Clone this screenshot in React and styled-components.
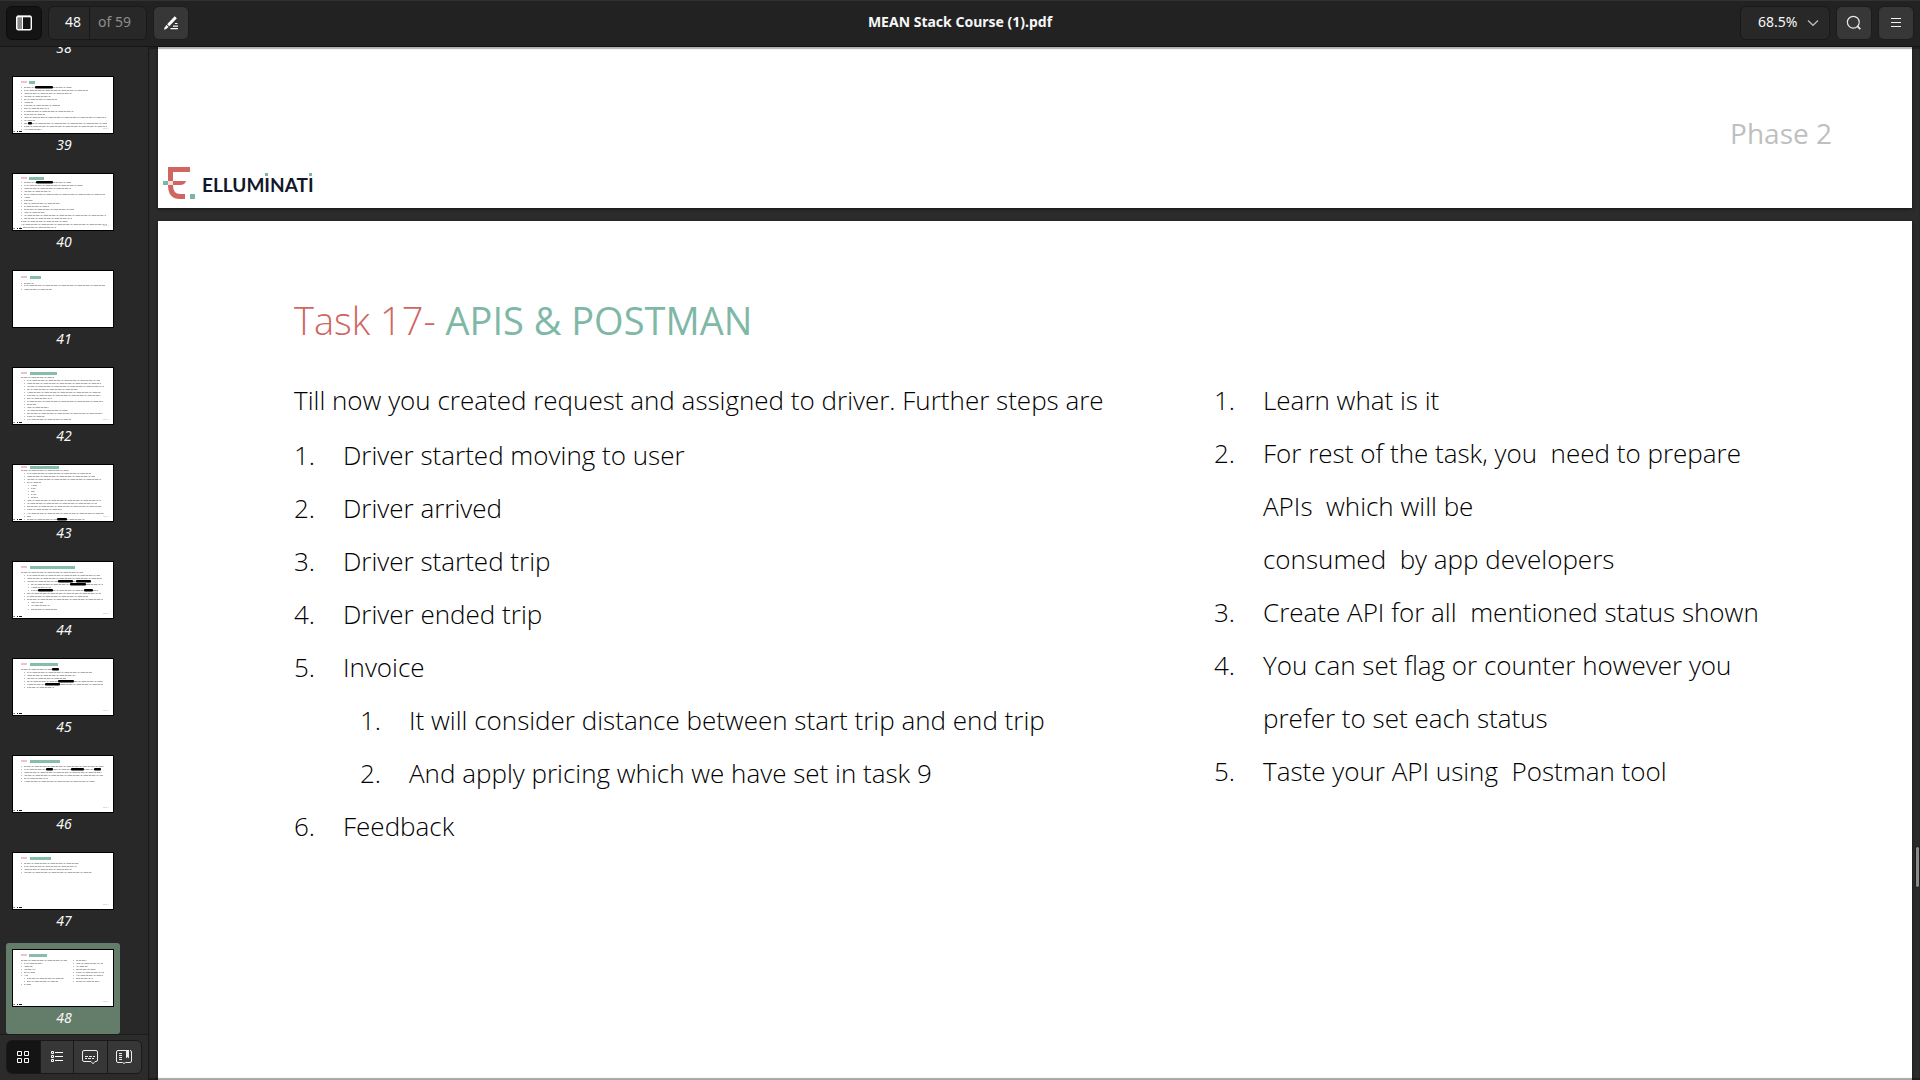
import React, { useState } from "react";
import styled, { createGlobalStyle, css } from "styled-components";

const GlobalStyle = createGlobalStyle`
  *, *::before, *::after { box-sizing: border-box; }
  body { margin: 0; background: #2b2b2b; }
  button, input, select { font: inherit; color: inherit; margin: 0; }
`;

const uiFont = `"Noto Sans", "Open Sans", sans-serif`;
const slideFont = `"Open Sans", "Noto Sans", sans-serif`;

const Window = styled.div`
  height: 100vh;
  display: flex;
  flex-direction: column;
  overflow: hidden;
  background: #2b2b2b;
  color: #f7f7f7;
  font: 14px/20px ${uiFont};
`;

const HeaderBar = styled.header`
  flex: none;
  height: 47px;
  display: grid;
  grid-template-columns: 1fr auto 1fr;
  align-items: start;
  padding: 5px 6px 0;
  background: #222222;
  border-top: 1px solid #323232;
  border-bottom: 1px solid #161616;
`;

const ToolGroup = styled.div`
  display: flex;
  gap: 6px;
  justify-content: ${(p) => (p.$end ? "flex-end" : "flex-start")};
`;

const Title = styled.h1`
  margin: 0;
  font-size: 14px;
  line-height: 32px;
  font-weight: 700;
`;

const ToolButton = styled.button`
  width: 36px;
  height: 34px;
  padding: 0;
  display: grid;
  place-items: center;
  border: 1px solid ${(p) => (p.$active ? "#0c0c0c" : "#1c1c1c")};
  border-radius: 6px;
  background: ${(p) => (p.$active ? "#141414" : "#373737")};
`;

const PageBox = styled.div`
  display: flex;
  height: 34px;
  border: 1px solid #191919;
  border-radius: 6px;
  background: #282828;
  overflow: hidden;
`;

const PageInput = styled.input`
  width: 41px;
  padding: 0 8px 2px 0;
  border: 0;
  border-right: 1px solid #191919;
  background: transparent;
  text-align: right;
  outline: 0;
`;

const PageTotal = styled.span`
  width: 56px;
  padding-left: 8px;
  line-height: 30px;
  color: #8d8d8d;
`;

const ZoomBox = styled.div`
  position: relative;
  svg {
    position: absolute;
    right: 11px;
    top: 13px;
    pointer-events: none;
  }
`;

const ZoomSelect = styled.select`
  appearance: none;
  width: 90px;
  height: 34px;
  padding: 0 24px 2px 17px;
  border: 1px solid #191919;
  border-radius: 6px;
  background: #282828;
  outline: 0;
`;

const Body = styled.div`
  flex: 1;
  min-height: 0;
  display: flex;
`;

const Sidebar = styled.aside`
  width: 149px;
  flex: none;
  display: flex;
  flex-direction: column;
  border-right: 1px solid #1a1a1a;
  background: #282828;
`;

const ThumbList = styled.ol`
  flex: 1;
  min-height: 0;
  margin: 0;
  padding: 0 0 0 6px;
  list-style: none;
  display: flex;
  flex-direction: column;
  justify-content: flex-end;
  align-items: flex-start;
  gap: 6px;
  overflow: hidden;
`;

const ThumbItem = styled.li`
  flex: none;
`;

const ThumbButton = styled.button`
  width: 114px;
  height: 91px;
  padding: 6px;
  display: flex;
  flex-direction: column;
  border: 0;
  border-radius: 3px;
  font-style: italic;
  background: ${(p) => (p.$active ? "#647d6b" : "transparent")};
  svg {
    flex: none;
    border: 1px solid #000;
    background: #fff;
  }
`;

const ThumbLabel = styled.span`
  width: 100%;
  padding-left: 2px;
  line-height: 21px;
  text-align: center;
`;

const SidebarFooter = styled.nav`
  flex: none;
  height: 46px;
  padding: 5px 6px;
  background: #2b2b2b;
  border-top: 1px solid #1c1c1c;
`;

const TabSwitch = styled.div`
  display: grid;
  grid-template-columns: repeat(4, 1fr);
  height: 34px;
  border: 1px solid #191919;
  border-radius: 6px;
  overflow: hidden;
`;

const Tab = styled.button`
  padding: 0;
  display: grid;
  place-items: center;
  border: 0;
  background: ${(p) => (p.$active ? "#141414" : "#373737")};
  &:not(:last-child) { border-right: 1px solid #191919; }
`;

const Viewer = styled.main`
  position: relative;
  flex: 1;
  min-width: 0;
  padding: 0 8px 0 9px;
  display: flex;
  flex-direction: column;
  gap: 13px;
  background: #2b2b2b;
  &::after {
    content: "";
    position: absolute;
    inset: 0;
    pointer-events: none;
    box-shadow: inset 0 2px 1px rgba(0, 0, 0, 0.3), inset 0 -2px 1px rgba(0, 0, 0, 0.35);
  }
`;

const ScrollThumb = styled.div`
  position: absolute;
  z-index: 1;
  right: 0;
  top: 799px;
  width: 5px;
  height: 42px;
  border: 1px solid #1a1a1a;
  border-radius: 3px;
  background: #8a8a8a;
`;

const sheet = css`
  background: #fff;
  color: #000;
  font-family: ${slideFont};
  box-shadow: 0 1px 3px rgba(0, 0, 0, 0.5);
`;

const PreviousPage = styled.section`
  ${sheet}
  flex: none;
  padding: 66px 80px 7px 5px;
  display: flex;
  flex-direction: column;
  gap: 14px;
`;

const Phase = styled.p`
  margin: 0;
  align-self: flex-end;
  font-size: 28px;
  line-height: 40px;
  color: #bfbfbf;
`;

const Brand = styled.div`
  display: flex;
  gap: 6px;
  height: 34px;
  font: 700 19px/36px Lato, sans-serif;
  color: #12182b;
`;

const DottedI = styled.span`
  position: relative;
  &::before {
    content: "";
    position: absolute;
    left: 1px;
    top: 0;
    width: 3px;
    height: 3px;
    background: #7cb5a4;
  }
`;

const CurrentPage = styled.section`
  ${sheet}
  flex: 1;
  padding: 73px 120px 0 136px;
`;

const SlideTitle = styled.h2`
  margin: 0 0 28px;
  font-size: 38px;
  line-height: 52px;
  font-weight: 300;
  color: #cf6660;
  b { font-weight: 400; color: #7fb8a6; }
`;

const Columns = styled.div`
  display: grid;
  grid-template-columns: 920fr 578fr;
  font-size: 26px;
  line-height: 53px;
  font-weight: 300;
`;

const Lead = styled.p`
  margin: 0 0 2px;
`;

const Steps = styled.ol`
  margin: 0;
  padding: 0;
  list-style: none;
  counter-reset: step;
  ol { padding-left: 17px; }
`;

const Step = styled.li`
  display: grid;
  grid-template-columns: 49px 1fr;
  white-space: pre-wrap;
  counter-increment: step;
  &::before { content: counter(step) "."; }
`;

/* Each text row of a miniature: [y, start, end, ...pairs of redacted spans] */
const THUMBS = [
  { n: 38, green: [17, 30], ty: 5, rows: [] },
  { n: 39, green: [16, 22], ty: 5, foot: 1, rows: [[10,11,59,22,40],[13,11,75],[16,11,59],[19,11,38],[22,11,44],[25,11,20],[28,11,47],[31,11,36],[34,11,61],[37,11,32],[40,11,93],[43,11,22],[46,11,94,15,19],[49,11,94],[52,11,29]] },
  { n: 40, green: [16, 31], ty: 4, foot: 1, rows: [[8,11,58,23,40],[11,11,70],[14,11,58],[17,11,38],[20,11,92],[23,11,17],[26,11,20],[29,11,47],[32,11,36],[35,11,61],[38,11,32],[41,11,93],[44,11,59],[47,8,55],[50,8,94],[53,10,43]] },
  { n: 41, green: [17, 28], ty: 6, rows: [[12,11,21],[14,11,92],[18,11,39]] },
  { n: 42, green: [17, 44], ty: 5, foot: 1, rows: [[9,8,41],[12,14,87],[15,14,88],[18,14,91],[21,14,65],[24,14,88],[27,14,88],[30,14,39],[33,14,90],[36,14,23],[39,14,36],[42,14,55],[45,14,90],[48,14,32],[51,14,58]] },
  { n: 43, green: [17, 46], ty: 2, foot: 1, rows: [[5,8,56],[8,14,78],[11,14,82],[14,14,88],[17,14,28],[20,18,24],[23,18,23],[26,18,22],[29,18,23],[32,18,25],[35,14,88],[38,14,84],[41,14,89],[44,14,49],[48,14,91],[51,14,18],[54,14,72,44,54]] },
  { n: 44, green: [17, 62], ty: 5, foot: 1, rows: [[10,8,70],[13,14,87],[16,14,89],[19,14,78,45,60,63,78],[22,18,90,57,73],[25,18,38],[28,18,85,25,40,71,80],[31,14,88],[34,14,75],[37,14,90],[40,18,30],[43,18,37],[47,18,44]] },
  { n: 45, green: [17, 45], ty: 5, foot: 1, rows: [[10,8,46,39,46],[13,14,79],[16,14,63],[19,14,53],[22,14,90,45,61],[25,14,90,32,47],[28,14,41]] },
  { n: 46, green: [17, 47], ty: 5, foot: 1, rows: [[10,11,91],[13,11,88,33,40,58,71,81,88],[16,11,89],[19,11,90],[22,11,35],[25,11,82]] },
  { n: 47, green: [17, 38], ty: 5, foot: 1, rows: [[10,11,66],[13,11,64],[16,11,59],[19,11,79]] },
  { n: 48, green: [16, 34], ty: 5, foot: 1, rows: [[10,8,54],[13,11,30],[16,11,20],[19,11,23],[22,11,22],[25,11,15],[28,14,51],[31,14,45],[34,11,18],[10,63,74],[13,63,90],[16,63,75],[19,63,83],[22,63,91],[25,63,90],[28,63,80],[31,63,87]] },
];

function Miniature({ data }) {
  return (
    <svg width="102" height="58" viewBox="0 0 100 56" aria-hidden="true">
      <rect x="8" y={data.ty - 1} width="6" height="2" fill="#f0c4c0" />
      <rect x={data.green[0]} y={data.ty - 1} width={data.green[1] - data.green[0]} height="3" fill="#86bdac" />
      {data.rows.map(([y, a, b, ...black], i) => (
        <g key={i}>
          {a !== 8 && <rect x={a - 3} y={y} width="1" height="1" fill="#bbb" />}
          <path d={`M${a} ${y + 0.5}H${b}`} stroke="#d6d6d6" strokeWidth="1" />
          <path d={`M${a} ${y + 0.5}H${b}`} stroke="#adadad" strokeWidth="1" strokeDasharray="2 1 3 2 1 2 4 1" strokeDashoffset={i * 5} />
          {black.map((x, k) =>
            k % 2 === 0 ? <rect key={k} x={x} y={y - 1} width={black[k + 1] - x} height="2.5" rx="1" fill="#000" /> : null
          )}
        </g>
      ))}
      {data.foot && (
        <g>
          <rect x="0" y="54" width="1" height="1" fill="#7cb5a4" />
          <rect x="1" y="54" width="1" height="1" fill="#cf6660" />
          <path d="M4 54.500H5M6 54.500H9" stroke="#12182b" />
          <path d="M90 51.500H94M95 51.500H96" stroke="#ddd" />
        </g>
      )}
    </svg>
  );
}

const SidebarIcon = () => (
  <svg width="16" height="16" viewBox="0 0 16 16">
    <rect x="1" y="2" width="5" height="13" fill="#8b8b8b" />
    <path d="M6.500 1V15" stroke="#fff" />
    <rect x="0.700" y="1.200" width="14.600" height="13.600" rx="1.500" fill="none" stroke="#fff" strokeWidth="1.400" />
    <path d="M1 1.500H15" stroke="#fff" strokeWidth="1.600" />
  </svg>
);

const PenIcon = () => (
  <svg width="16" height="16" viewBox="0 0 16 16" fill="#fff">
    <path d="M11.700 1.200 13.800 3.300 6.300 11.300 4.100 9.200z" />
    <path d="M3.500 9.900 5.600 12 3.200 14 1 14.800 1.600 12.500z" />
    <path d="M12 8.500H14.500M10 11.200H15M7.500 13.700H15" stroke="#fff" strokeWidth="1.200" />
  </svg>
);

const SearchIcon = () => (
  <svg width="16" height="16" viewBox="0 0 16 16" fill="none" stroke="#e8e8e8" strokeWidth="1.200">
    <circle cx="7.300" cy="7.200" r="5.900" />
    <path d="M11.300 11.200 14.300 14.200" strokeWidth="1.800" />
  </svg>
);

const MenuIcon = () => (
  <svg width="16" height="16" viewBox="0 0 16 16" stroke="#f2f2f2">
    <path d="M3 3.500H13M3 7.500H13M3 11.500H13" />
  </svg>
);

const GridIcon = () => (
  <svg width="16" height="16" viewBox="0 0 16 16" fill="none" stroke="#fff">
    <path d="M2.500 2.500h4v4h-4zM9.500 2.500h4v4h-4zM2.500 9.500h4v4h-4zM9.500 9.500h4v4h-4z" />
  </svg>
);

const OutlineIcon = () => (
  <svg width="16" height="16" viewBox="0 0 16 16" fill="none" stroke="#fff">
    <path d="M2.500 2.500h2v2h-2zM2.500 6.500h2v2h-2zM2.500 10.500h2v2h-2zM6 3.500h8M6 7.500h8M6 11.500h8" />
  </svg>
);

const NotesIcon = () => (
  <svg width="16" height="16" viewBox="0 0 16 16" fill="none" stroke="#eee">
    <path d="M2 1.500H14Q15.500 1.500 15.500 3V11Q15.500 12.500 14 12.500H13L11 14.800 9 12.500H2Q.5 12.500 .5 11V3Q.5 1.500 2 1.500z" />
    <path d="M3 7.500h3M7 7.500h3M11 7.500h2M3 9.500h2M6 9.500h3M10 9.500h2" />
  </svg>
);

const BookIcon = () => (
  <svg width="16" height="16" viewBox="0 0 16 16" fill="none" stroke="#eee">
    <path d="M10 1.500H2Q.5 1.500 .5 3V12Q.5 13.500 2 13.500H6.500L8 14.500 9.500 13.500H14Q15.500 13.500 15.500 12V3Q15.500 1.500 14 1.500" />
    <path d="M3 4.500h3M3 6.500h3M3 8.500h3M3 10.500h3" />
    <path d="M10 1h3v8.500l-1.500-1.500-1.500 1.500z" fill="#eee" stroke="none" />
  </svg>
);

const BrandMark = () => (
  <svg width="33" height="34" viewBox="0 0 33 34">
    <path d="M27 2.500H7.500V18Q7.500 29.500 17 29.500H22" fill="none" stroke="#cf6660" strokeWidth="5" />
    <path d="M10 14H23Q22 18 17 18H10z" fill="#cf6660" />
    <rect x="5" y="14" width="5" height="4" fill="#f6dedb" />
    <rect x="0" y="14" width="5" height="4" fill="#7cb5a4" />
    <rect x="27" y="27" width="5" height="5" fill="#7cb5a4" />
  </svg>
);

const TABS = [
  ["Thumbnails", GridIcon],
  ["Outline", OutlineIcon],
  ["Annotations", NotesIcon],
  ["Bookmarks", BookIcon],
];

export default function App() {
  const [page, setPage] = useState("48");
  const [tab, setTab] = useState("Thumbnails");
  return (
    <Window>
      <GlobalStyle />
      <HeaderBar>
        <ToolGroup>
          <ToolButton $active aria-label="Side pane"><SidebarIcon /></ToolButton>
          <PageBox>
            <PageInput aria-label="Page" value={page} onChange={(e) => setPage(e.target.value)} />
            <PageTotal>of 59</PageTotal>
          </PageBox>
          <ToolButton aria-label="Annotate"><PenIcon /></ToolButton>
        </ToolGroup>
        <Title>MEAN Stack Course (1).pdf</Title>
        <ToolGroup $end>
          <ZoomBox>
            <ZoomSelect aria-label="Zoom" defaultValue="68.5%">
              <option>68.5%</option>
              <option>100%</option>
            </ZoomSelect>
            <svg width="12" height="8" viewBox="0 0 12 8" fill="none" stroke="#bdbdbd" strokeWidth="1.200">
              <path d="M1 1.500 6 6.300 11 1.500" />
            </svg>
          </ZoomBox>
          <ToolButton aria-label="Search"><SearchIcon /></ToolButton>
          <ToolButton aria-label="Menu"><MenuIcon /></ToolButton>
        </ToolGroup>
      </HeaderBar>
      <Body>
        <Sidebar>
          <ThumbList>
            {THUMBS.map((t) => (
              <ThumbItem key={t.n}>
                <ThumbButton $active={String(t.n) === page} onClick={() => setPage(String(t.n))}>
                  <Miniature data={t} />
                  <ThumbLabel>{t.n}</ThumbLabel>
                </ThumbButton>
              </ThumbItem>
            ))}
          </ThumbList>
          <SidebarFooter>
            <TabSwitch>
              {TABS.map(([name, Icon]) => (
                <Tab key={name} aria-label={name} $active={name === tab} onClick={() => setTab(name)}>
                  <Icon />
                </Tab>
              ))}
            </TabSwitch>
          </SidebarFooter>
        </Sidebar>
        <Viewer>
          <PreviousPage>
            <Phase>Phase 2</Phase>
            <Brand>
              <BrandMark />
              <span>ELLUM<DottedI>I</DottedI>NAT<DottedI>I</DottedI></span>
            </Brand>
          </PreviousPage>
          <CurrentPage>
            <SlideTitle>Task 17- <b>APIS &amp; POSTMAN</b></SlideTitle>
            <Columns>
              <div>
                <Lead>Till now you created request and assigned to driver. Further steps are</Lead>
                <Steps>
                  <Step>Driver started moving to user</Step>
                  <Step>Driver arrived</Step>
                  <Step>Driver started trip</Step>
                  <Step>Driver ended trip</Step>
                  <Step>
                    <div>
                      Invoice
                      <Steps>
                        <Step>It will consider distance between start trip and end trip</Step>
                        <Step>And apply pricing which we have set in task 9</Step>
                      </Steps>
                    </div>
                  </Step>
                  <Step>Feedback</Step>
                </Steps>
              </div>
              <Steps>
                <Step>Learn what is it</Step>
                <Step>{"For rest of the task, you  need to prepare\nAPIs  which will be\nconsumed  by app developers"}</Step>
                <Step>{"Create API for all  mentioned status shown"}</Step>
                <Step>{"You can set flag or counter however you\nprefer to set each status"}</Step>
                <Step>{"Taste your API using  Postman tool"}</Step>
              </Steps>
            </Columns>
          </CurrentPage>
          <ScrollThumb />
        </Viewer>
      </Body>
    </Window>
  );
}
